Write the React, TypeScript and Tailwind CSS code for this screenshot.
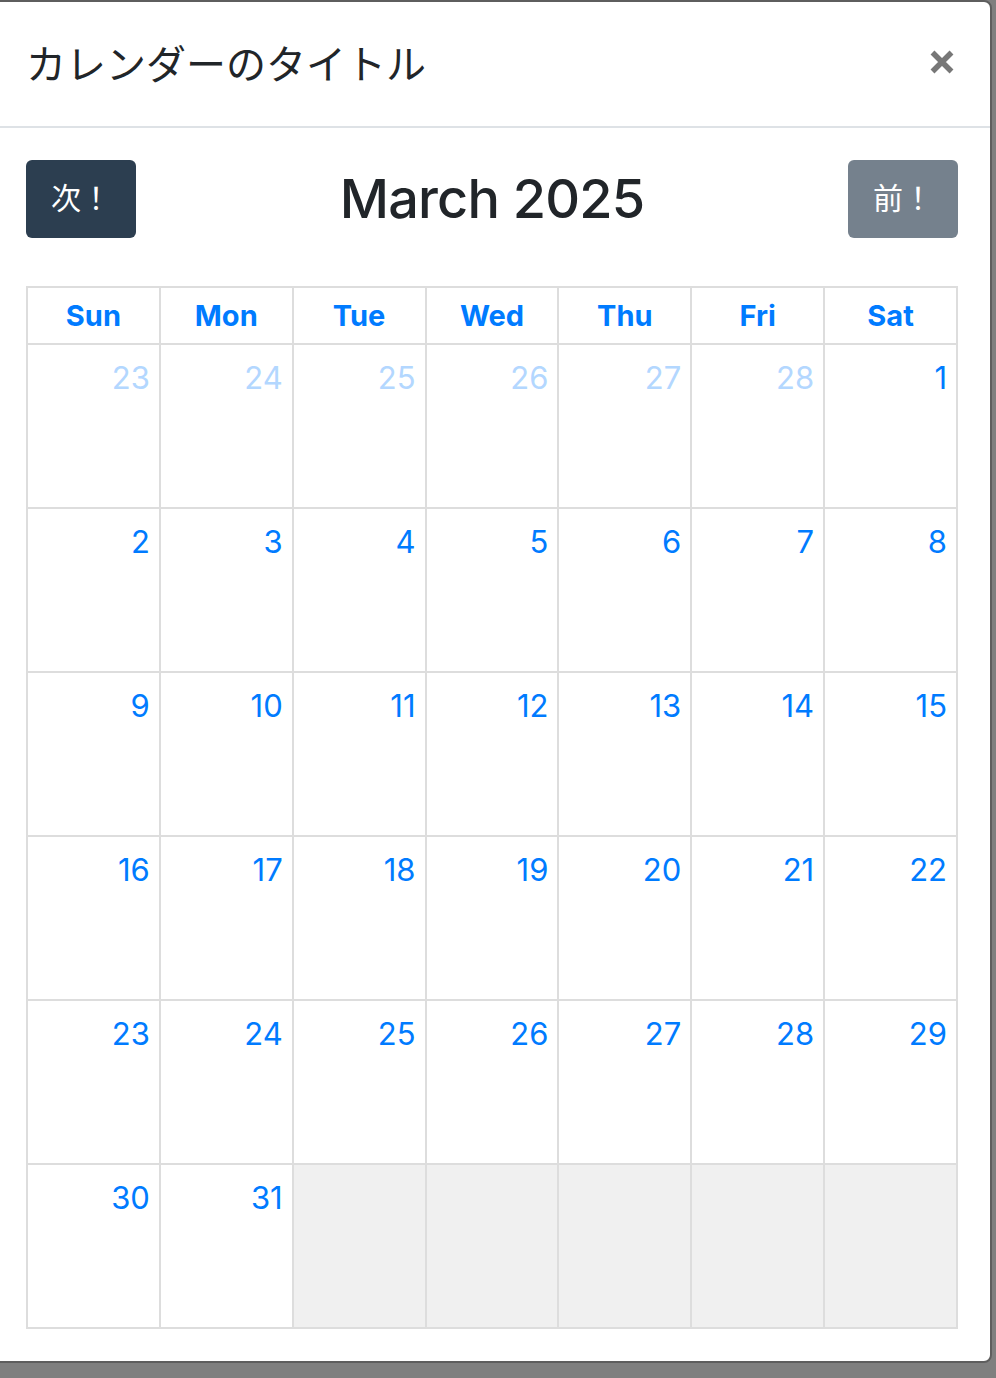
import React from "react";

const days = ["Sun", "Mon", "Tue", "Wed", "Thu", "Fri", "Sat"];

type Cell = { n: number | null; other?: boolean };

const cells: Cell[] = [
  { n: 23, other: true },
  { n: 24, other: true },
  { n: 25, other: true },
  { n: 26, other: true },
  { n: 27, other: true },
  { n: 28, other: true },
  ...Array.from({ length: 31 }, (_, i) => ({ n: i + 1 })),
  { n: null },
  { n: null },
  { n: null },
  { n: null },
  { n: null },
];

export default function App() {
  return (
    <div className="h-[1378px] w-[996px] overflow-hidden bg-[#7f7f7f]">
      <div className="ml-[-8px] w-[1000px] rounded-[8px] border-2 border-[#5e5e5e] bg-white">
        {/* Header */}
        <div className="flex h-[126px] items-center justify-between border-b-2 border-[#dee2e6] pb-[5px] pl-[32px] pr-[35px]">
          <h1
            className="text-[40px] font-normal leading-none text-[#212529]"
            style={{ fontFamily: '"Noto Sans CJK JP", "Noto Sans", sans-serif' }}
          >
            カレンダーのタイトル
          </h1>
          <button className="flex h-[26px] w-[26px] items-center justify-center">
            <svg width="26" height="26" viewBox="0 0 26 26">
              <path
                d="M3.5 3.5 L22.5 22.5 M22.5 3.5 L3.5 22.5"
                stroke="#777777"
                strokeWidth="5.5"
                strokeLinecap="butt"
              />
            </svg>
          </button>
        </div>

        {/* Body */}
        <div className="px-[32px] pt-[32px] pb-[32px]">
          <div className="flex items-center justify-between">
            <button
              className="flex h-[78px] w-[110px] items-center justify-center rounded-[6px] bg-[#2c3e50] pb-[5px] text-[30px] text-white"
              style={{ fontFamily: '"Noto Sans CJK JP", "Noto Sans", sans-serif' }}
            >
              次！
            </button>
            <h2
              className="text-[54px] font-medium leading-none tracking-[-0.8px] text-[#212529]"
              style={{ fontFamily: 'Inter, "Liberation Sans", sans-serif' }}
            >
              March 2025
            </h2>
            <button
              className="flex h-[78px] w-[110px] items-center justify-center rounded-[6px] bg-[#75818d] pb-[5px] text-[30px] text-white"
              style={{ fontFamily: '"Noto Sans CJK JP", "Noto Sans", sans-serif' }}
            >
              前！
            </button>
          </div>

          <div
            className="mt-[48px] grid grid-cols-7 border-l-2 border-t-2 border-[#dddddd]"
            style={{ fontFamily: 'Inter, "Liberation Sans", sans-serif' }}
          >
            {days.map((d) => (
              <div
                key={d}
                className="flex h-[57px] items-center justify-center border-b-2 border-r-2 border-[#dddddd] text-[29px] font-bold text-[#007bff]"
              >
                {d}
              </div>
            ))}
            {cells.map((c, i) => (
              <div
                key={i}
                className={
                  c.n === null
                    ? "h-[164px] border-b-2 border-r-2 border-[#dddddd] bg-[#f0f0f0]"
                    : "h-[164px] border-b-2 border-r-2 border-[#dddddd] bg-white pr-[9px] pt-[10px] text-right"
                }
              >
                {c.n !== null && (
                  <span
                    className={
                      c.other
                        ? "text-[31px] leading-[45px] text-[#b3d7ff]"
                        : "text-[31px] leading-[45px] text-[#007bff]"
                    }
                  >
                    {c.n}
                  </span>
                )}
              </div>
            ))}
          </div>
        </div>
      </div>
    </div>
  );
}
